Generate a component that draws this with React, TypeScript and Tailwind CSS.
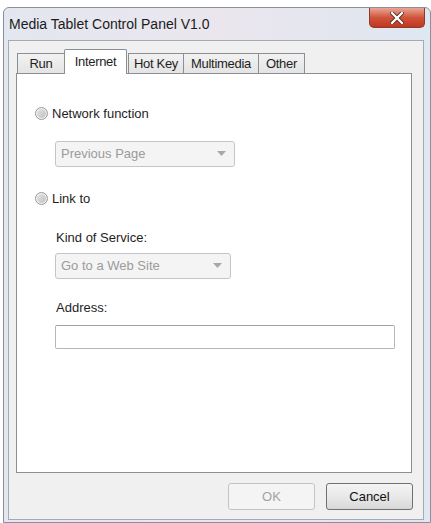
import React from "react";

const tabs = ["Run", "Internet", "Hot Key", "Multimedia", "Other"];

function Radio({ label }: { label: string }) {
  return (
    <div className="flex items-center gap-[4px] text-[13px] text-[#1e1e1e]">
      <span className="h-[13px] w-[13px] rounded-full border border-[#9a9a9a] bg-gradient-to-br from-[#e8e8e8] to-[#bdbdbd] shadow-[inset_0_0_0_1px_#f6f6f6]" />
      <span>{label}</span>
    </div>
  );
}

function Combo({ value, width }: { value: string; width: string }) {
  return (
    <div
      className={`flex h-[26px] items-center justify-between rounded-[3px] border border-[#c3c6c9] bg-[#f4f4f4] pl-[5px] pr-[8px] text-[13px] text-[#9b9b9b] ${width}`}
    >
      <span>{value}</span>
      <svg width="9" height="5" viewBox="0 0 9 5">
        <path d="M0 0h9L4.5 5z" fill="#a8a8a8" />
      </svg>
    </div>
  );
}

export default function App() {
  return (
    <div className="h-[523px] w-[431px] bg-white pl-[3px] pt-[7px]" style={{ fontFamily: '"Liberation Sans", Arial, sans-serif' }}>
      <div className="relative flex h-[516px] w-[428px] flex-col rounded-t-[6px] border border-[#8a8f9b] bg-gradient-to-r from-[#e3e7ef] via-[#ebe6ee] to-[#dfe7f1] pb-[2px] pl-[4px] pr-[6px]">
        <div className="flex h-[32px] items-center pl-[1px] text-[14px] text-[#1b1b1b]">
          Media Tablet Control Panel V1.0
        </div>
        <div className="absolute right-[5px] top-0 flex h-[20px] w-[56px] items-center justify-center rounded-b-[5px] border border-t-0 border-[#8a3a2e] bg-gradient-to-b from-[#e8a695] via-[#d0533c] to-[#c2361f]">
          <svg width="14" height="12" viewBox="0 0 14 12">
            <path d="M2 1l10 10M12 1L2 11" stroke="#5a2a22" strokeWidth="4" strokeLinecap="round" />
            <path d="M2 1l10 10M12 1L2 11" stroke="#ffffff" strokeWidth="2.4" strokeLinecap="round" />
          </svg>
        </div>
        <div className="flex flex-1 flex-col border border-[#a4a9b3] bg-[#f0f0f0] px-[7px] pt-[8px]">
          <div className="flex h-[24px] items-end pl-[1px]">
            {tabs.map((t) =>
              t === "Internet" ? (
                <div
                  key={t}
                  className="relative z-10 -mb-px mx-[-1px] flex h-[25px] w-[63px] items-start justify-center rounded-t-[2px] border border-b-0 border-[#8c8e94] bg-white pt-[2px] text-[13px] tracking-[-0.3px] text-[#1e1e1e]"
                >
                  {t}
                </div>
              ) : (
                <div
                  key={t}
                  className={`flex h-[20px] items-center justify-center border border-b-0 border-[#8c8e94] bg-gradient-to-b from-[#f2f2f2] to-[#e4e4e4] text-[13px] tracking-[-0.3px] text-[#1e1e1e] ${
                    t === "Run" ? "w-[48px]" : t === "Hot Key" ? "w-[56px] ml-[2px]" : t === "Multimedia" ? "w-[76px] -ml-px" : "w-[47px] -ml-px"
                  }`}
                >
                  {t}
                </div>
              )
            )}
          </div>
          <div className="mr-[4px] flex h-[400px] flex-col border border-[#8c8e94] bg-white pl-[18px] pt-[30px]">
            <Radio label="Network function" />
            <div className="ml-[20px] mt-[17px]">
              <Combo value="Previous Page" width="w-[180px]" />
            </div>
            <div className="mt-[22px]">
              <Radio label="Link to" />
            </div>
            <div className="ml-[21px] mt-[20px] text-[13px] text-[#1e1e1e]">Kind of Service:</div>
            <div className="ml-[20px] mt-[5px]">
              <Combo value="Go to a Web Site" width="w-[176px]" />
            </div>
            <div className="ml-[21px] mt-[19px] text-[13px] text-[#1e1e1e]">Address:</div>
            <div className="ml-[20px] mt-[8px] h-[24px] w-[340px] rounded-[2px] border border-[#b4b7ba] border-t-[#a0a3a7] bg-white" />
          </div>
          <div className="mr-[3px] mt-[10px] flex justify-end gap-[11px]">
            <div className="flex h-[27px] w-[87px] items-center justify-center rounded-[3px] border border-[#c2c5c8] bg-[#f4f4f4] text-[13px] text-[#a3a3a3]">
              OK
            </div>
            <div className="flex h-[27px] w-[87px] items-center justify-center rounded-[3px] border border-[#707070] bg-gradient-to-b from-[#f4f4f4] via-[#e9e9e9] to-[#d8d8d8] text-[13px] text-[#111]">
              Cancel
            </div>
          </div>
        </div>
      </div>
    </div>
  );
}
